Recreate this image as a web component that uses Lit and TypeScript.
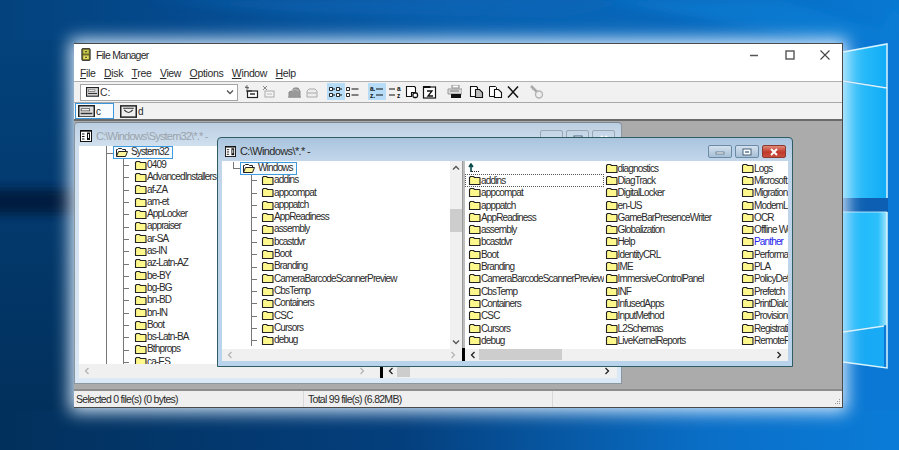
import { LitElement, html, css, svg } from "lit";
import { customElement } from "lit/decorators.js";

const folder = (open = false) => html`<svg class="fd" viewBox="0 0 13 11" width="13" height="11">
  ${open
    ? svg`<path d="M1.5 9.5V2.5h1l1-1h3l1 1h3v1.5" fill="#fff" stroke="#222" stroke-width="1"/><path d="M1.5 9.5l2-5h9l-2 5z" fill="#fff59a" stroke="#222" stroke-width="1"/>`
    : svg`<path d="M1.5 9.5V2.5l1-1h3l1 1h5l.5.5v6.5z" fill="#fdf78c" stroke="#222" stroke-width="1.1"/>`}
</svg>`;

const winIcon = (s: number) => html`<svg viewBox="0 0 12 12" width=${s} height=${s}>
  <rect x=".5" y=".5" width="11" height="11" fill="#fff" stroke="#111"/>
  <path d="M.5 1h11" stroke="#111" stroke-width="1.4"/>
  <path d="M2 4h2.5M2 6.5h2.5M2 9h2.5" stroke="#111"/>
  <rect x="7" y="2.5" width="3" height="7.5" fill="#111"/>
  <path d="M8.5 4v4" stroke="#fff"/>
</svg>`;

const driveIcon = (w: number) => html`<svg viewBox="0 0 16 12" width=${w} height=${(w * 12) / 16}>
  <rect x=".7" y=".7" width="14.6" height="10.6" fill="#ddd" stroke="#222" stroke-width="1.4"/>
  <rect x="3" y="3.5" width="8" height="2" fill="#fff" stroke="#444" stroke-width=".7"/>
  <path d="M2.5 8h11" stroke="#333" stroke-width="1.4"/>
</svg>`;

const cdIcon = html`<svg viewBox="0 0 16 12" width="17" height="13">
  <rect x=".7" y=".7" width="14.6" height="10.6" fill="#eee" stroke="#222" stroke-width="1.4"/>
  <path d="M3 3h10M4 4.5q4 5 8 0" fill="none" stroke="#333" stroke-width="1"/>
</svg>`;

const I: Record<string, any> = {
  connect: svg`<path d="M2 0v5M0 2.5h4M.5 1l3 3" stroke="#555" stroke-width=".8"/><rect x="2.5" y="6" width="10" height="6.5" fill="#fff" stroke="#222" stroke-width="1.2"/><path d="M1 6h6" stroke="#222"/><path d="M5 9h5" stroke="#222" stroke-width="1.4"/>`,
  disconnect: svg`<path d="M1 1l4 4M5 1l-4 4" stroke="#888" stroke-width="1"/><rect x="3" y="6" width="9" height="6" fill="#f3f3f3" stroke="#aaa"/><path d="M5 9h5" stroke="#bbb"/>`,
  share: svg`<path d="M2 12V7l3-1 2-3h4l2 3v6z" fill="#999" stroke="#888"/><path d="M5 6l3-2 4 2" stroke="#bbb" fill="none"/><path d="M1 12h13" stroke="#999" stroke-width="1.4"/>`,
  unshare: svg`<path d="M3 12V6l2-2h6l2 2v6z" fill="#ededed" stroke="#aaa"/><path d="M3 8h10" stroke="#bbb" stroke-width="1.4"/>`,
  bigl: svg`<path d="M1.5 2.5h3v3h-3zM8.5 2.5h3v3h-3zM1.5 8.5h3v3h-3zM8.5 8.5h3v3h-3z" fill="#fff" stroke="#111" stroke-width=".9"/><path d="M5 4h2M12 4h2M5 10h2M12 10h2" stroke="#111"/>`,
  list: svg`<path d="M1.5 2.5h3v3h-3zM1.5 8.5h3v3h-3z" fill="#fff" stroke="#111" stroke-width=".9"/><path d="M6.5 4h7M6.5 10h7" stroke="#111" stroke-width="1.1"/>`,
  az: svg`<text x="1" y="6" font-family="Liberation Sans" font-size="6.5" font-weight="700" fill="#111">a.</text><text x="1" y="13" font-family="Liberation Sans" font-size="6.5" font-weight="700" fill="#111">z.</text><path d="M7 4h7M7 10h7" stroke="#111"/>`,
  za: svg`<text x="9" y="6" font-family="Liberation Sans" font-size="6.5" font-weight="700" fill="#111">a</text><text x="9" y="13" font-family="Liberation Sans" font-size="6.5" font-weight="700" fill="#111">z</text><path d="M1 4h6M1 10h6" stroke="#111"/>`,
  find: svg`<path d="M1.5 1.5h8l1 1v5h-4v4h-5z" fill="#fff" stroke="#111" stroke-width="1.1"/><rect x="8" y="8" width="4.5" height="4.5" rx="1.5" fill="#fff" stroke="#111" stroke-width="1.3"/>`,
  help: svg`<rect x="1.5" y="2" width="12" height="11" fill="#fff" stroke="#111" stroke-width="1.2"/><path d="M1 1h9v2H1z" fill="#111"/><rect x="8.500" y="1" width="4" height="2" fill="#777"/><path d="M5 6h5l-4 5h5" fill="none" stroke="#111" stroke-width="1.3"/>`,
  print: svg`<rect x="5" y="0" width="7" height="3" fill="#fff" stroke="#888"/><path d="M1 4h14v5H1z" fill="#ddd" stroke="#999"/><rect x="4" y="9" width="10" height="4" fill="#111"/><path d="M3 6h9" stroke="#777"/>`,
  copy: svg`<path d="M1.500 1.500h6l1 1v9h-7z" fill="#fff" stroke="#111" stroke-width="1.100"/><path d="M6.500 4.500h4l3 3v5h-7z" fill="#bbb" stroke="#111" stroke-width="1.100"/>`,
  paste: svg`<path d="M1.500 1.500h6l1 1v9h-7z" fill="#fff" stroke="#111"/><path d="M6.500 4.500h4l3 3v5h-7z" fill="#fff" stroke="#111" stroke-width="1.100"/>`,
  del: svg`<path d="M2 1.500l10 11M12 1.500l-10 11" stroke="#111" stroke-width="1.500"/>`,
  key: svg`<path d="M2 1l6 6" stroke="#aaa" stroke-width="2.500"/><circle cx="10" cy="9.500" r="3.500" fill="#eee" stroke="#b5b5b5" stroke-width="1.400"/><path d="M3 5l2-2" stroke="#b5b5b5"/>`,
};

const tools: [string, number, boolean?][] = [
  ["connect", 6], ["disconnect", 0], ["share", 8], ["unshare", 0], ["bigl", 6.5, true], ["list", -0.5],
  ["az", 6.5, true], ["za", 1.5], ["find", 0], ["help", 0], ["print", 8], ["copy", 5], ["paste", 2], ["del", 1], ["key", 6],
];

const backRows = ["0409","AdvancedInstallers","af-ZA","am-et","AppLocker","appraiser","ar-SA","as-IN","az-Latn-AZ","be-BY","bg-BG","bn-BD","bn-IN","Boot","bs-Latn-BA","Bthprops","ca-ES"];
const frontRows = ["addins","appcompat","apppatch","AppReadiness","assembly","bcastdvr","Boot","Branding","CameraBarcodeScannerPreview","CbsTemp","Containers","CSC","Cursors","debug"];
const col2 = ["diagnostics","DiagTrack","DigitalLocker","en-US","GameBarPresenceWriter","Globalization","Help","IdentityCRL","IME","ImmersiveControlPanel","INF","InfusedApps","InputMethod","L2Schemas","LiveKernelReports"];
const col3 = ["Logs","Microsoft.NET","Migration","ModemLogs","OCR","Offline Web Pages","Panther","Performance","PLA","PolicyDefinitions","Prefetch","PrintDialog","Provisioning","Registration","RemotePackages"];

const chev = (d: string, cls = "") => html`<svg class=${cls} viewBox="0 0 8 8" width="8" height="8"><path d=${d} fill="none" stroke="currentColor" stroke-width="1.300"/></svg>`;
const L = "M5.500 1l-3 3 3 3", R = "M2.500 1l3 3-3 3", U = "M1 5.500l3-3 3 3", D = "M1 2.500l3 3 3-3";

@customElement("app-root")
export class AppRoot extends LitElement {
  static styles = css`
    :host { display: block; width: 899px; height: 450px; }
    * { box-sizing: border-box; }
    .desk { position: relative; width: 899px; height: 450px; overflow: hidden; background: #0a6ec4;
      font-family: "Liberation Sans", Arial, sans-serif; font-size: 10px; color: #2a2a2a; }
    .wall { position: absolute; inset: 0; }
    .win { position: absolute; left: 74px; top: 43px; width: 769px; height: 365px; display: flex; flex-direction: column;
      background: #fff; border: 1px solid #4a4a4a; border-width: 1px 1px 1px 0;
      box-shadow: 0 0 16px 4px rgba(226,240,255,.95); }
    .title { height: 21px; flex: none; display: flex; align-items: center; padding-left: 7px; font-size: 10.500px; letter-spacing: -.72px; }
    .title .name { flex: 1; margin-left: 5px; }
    .wc { width: 36px; display: flex; justify-content: center; }
    .wc.cl { width: 34px; }
    .wc svg { display: block; }
    .menu { height: 17px; flex: none; display: flex; align-items: center; gap: 8.500px; padding-left: 6px; font-size: 10.500px; letter-spacing: -.35px; border-bottom: 1px solid #b0b0b0; }
    .menu u { text-decoration-thickness: 1px; text-underline-offset: 1px; }
    .tools { height: 21px; flex: none; display: flex; align-items: center; background: #f1f1f1; padding-left: 6px; border-bottom: 1px solid #a8a8a8; }
    .combo { width: 158px; height: 17px; flex: none; background: #fff; border: 1px solid #a5a5a5; display: flex; align-items: center; gap: 1px; padding: 0 3px 0 5px; font-size: 10.500px; color: #333; }
    .combo .sp { flex: 1; }
    .combo svg.cv { color: #555; }
    .tb { width: 17px; height: 17px; flex: none; display: flex; align-items: center; justify-content: center; margin-top: -1px; }
    .tb.on { background: #b6dcf7; width: 18px; }
    .drives { height: 18px; flex: none; display: flex; align-items: center; gap: 4px; background: #f1f1f1; padding-left: 1px; border-bottom: 2px solid #6a6a6a; }
    .drv { height: 16px; display: flex; align-items: center; gap: 1px; padding: 0 2px; width: 39px; font-size: 10px; }
    .drv.on { border: 1px solid #3a96dd; background: #f8fbfe; }
    .mdi { flex: 1; position: relative; background: #ababab; overflow: hidden; }
    .status { height: 18px; flex: none; display: flex; align-items: center; background: #efefef; border-top: 2px solid #8d8d8d; position: relative; letter-spacing: -.72px; font-size: 10.500px; }
    .s1 { width: 230px; height: 100%; padding-left: 2px; border-right: 1px solid #d8d8d8; display: flex; align-items: center; }
    .s2 { width: 249px; height: 100%; padding-left: 4px; border-right: 1px solid #d8d8d8; display: flex; align-items: center; }
    .grip { position: absolute; right: 1px; bottom: 1px; }

    .mw { position: absolute; display: flex; flex-direction: column; padding: 0 4px 5px; border: 1px solid #2f5d63; border-radius: 4px 4px 0 0; }
    .back { left: 0; top: 1px; width: 548px; height: 262px; border-color: #8a96a0; border-top-color: #7b8894;
      background: linear-gradient(180deg, #bccfe2, #cfdfee 22px, #dbe8f5); }
    .front { left: 143px; top: 16px; width: 576px; height: 230px;
      background: linear-gradient(180deg, #a9c4de, #c2d6ea 22px, #b9d3ec); }
    .cap { height: 23px; flex: none; display: flex; align-items: center; gap: 4px; padding: 3px 0 0 3px; font-size: 11px; letter-spacing: -.62px; }
    .back .cap { color: #9aa3ab; padding-left: 1px; letter-spacing: -.82px; }
    .cap .name { flex: 1; }
    .cbs { display: flex; gap: 3px; margin-right: 2px; margin-top: 1px; }
    .cb { width: 24px; height: 13px; border-radius: 2px; border: 1px solid #6b8aa6; background: linear-gradient(180deg,#d4e1ee,#a7bfd6); display: flex; align-items: center; justify-content: center; }
    .cb.x { background: linear-gradient(180deg,#e08a78,#c0392b 55%,#c9503c); border-color: #8a3a30; }
    .back .cb { background: transparent; border-color: #9aa6b2; width: 23px; height: 17px; }
    .back .cbs { align-self: flex-start; margin-top: 4px; margin-right: 2px; }
    .client { flex: 1; display: flex; min-height: 0; }
    .pane { display: flex; flex-direction: column; min-width: 0; background: #fff; }
    .back .tp { width: 301px; } .back .lp { flex: 1; }
    .front .tp { width: 240px; } .front .lp { flex: 1; }
    .split { width: 3px; flex: none; background: #bdbdbd; display: flex; align-items: flex-end; border-left: 1px solid #9a9a9a; }
    .split i { display: block; width: 3px; margin-left: -1px; height: 13px; background: #000; }
    .back .split i { height: 14px; }
    .body { flex: 1; display: flex; min-height: 0; overflow: hidden; }
    .rows { flex: 1; min-width: 0; position: relative; overflow: hidden; padding-top: 1px; }
    .row { height: 12.300px; line-height: 12.300px; display: flex; align-items: center; white-space: nowrap; position: relative; letter-spacing: -.85px; }
    .fd { flex: none; display: block; }
    .box { display: flex; align-items: center; border: 1px solid #3f9be0; height: 13px; padding: 0 3px 0 1px; background: #f6fbff; position: relative; z-index: 1; }
    .box .txt { margin-left: 3px; }
    .front .row.root { padding-left: 18px; }
    .back .row.root { padding-left: 34px; margin-top: -1px; height: 13px; }
    .front .row.kid { padding-left: 39px; }
    .back .row.kid { padding-left: 55px; }
    .row.kid::before { content: ""; position: absolute; top: 0; bottom: 0; left: var(--lx); width: 1px; background: #777; }
    .row.kid::after { content: ""; position: absolute; top: 50%; left: var(--lx); width: 6px; height: 1px; background: #777; }
    .front .rows { --lx: 29px; --rx: 11px; --rw: 7px; }
    .back .rows { --lx: 44px; --rx: 27px; --rw: 7px; }
    .row.root::before { content: ""; position: absolute; left: var(--rx); top: 0; height: 50%; width: 1px; background: #777; }
    .row.root::after { content: ""; position: absolute; left: var(--rx); top: 50%; width: var(--rw); height: 1px; background: #777; }
    .back .rows::after { content: ""; position: absolute; left: 27px; top: 0; bottom: 0; width: 1px; background: #777; }
    .vs { width: 12px; flex: none; background: #f0f0f0; display: flex; flex-direction: column; align-items: center; justify-content: space-between; padding: 3px 0; position: relative; color: #555; }
    .vthumb { position: absolute; left: 0; top: 48px; width: 12px; height: 23px; background: #cdcdcd; }
    .hs { height: 12px; flex: none; background: #f0f0f0; display: flex; align-items: center; justify-content: space-between; padding: 0 4px; position: relative; color: #222; }
    .back .hs { height: 14px; }
    .hs.dim { color: #b5b5b5; }
    .hthumb { position: absolute; top: 0; bottom: 1px; background: #cdcdcd; }
    .front .hthumb { left: 14px; width: 83px; }
    .back .hthumb { left: 14px; width: 13px; }
    .grid { flex: 1; min-height: 0; display: grid; grid-auto-flow: column; grid-template-rows: repeat(15, 12.300px); grid-template-columns: 136.500px 136.500px 1fr; padding: 1px 0 0 2px; overflow: hidden; }
    .cell { height: 12.300px; display: flex; align-items: center; white-space: nowrap; overflow: hidden; letter-spacing: -.85px; padding-left: 1px; }
    .cell.sel { outline: 1px dotted #555; outline-offset: -1px; margin-left: -2px; padding-left: 3px; height: 13px; }
    .cell.blue { color: #2424ee; }
    .hold { margin-right: 1px; display: flex; }
    .hold.b1 { margin-right: 10px; }
    .hold.b2 { margin-right: 2px; }
  `;

  wall() {
    return html`<svg class="wall" viewBox="0 0 899 450" width="899" height="450">
      <defs>
        <linearGradient id="top" x1="0" y1="0" x2="1" y2="0"><stop offset="0" stop-color="#03427c"/><stop offset=".2" stop-color="#054a8e"/><stop offset=".5" stop-color="#0a60ae"/><stop offset=".75" stop-color="#0868bc"/><stop offset="1" stop-color="#0878d2"/></linearGradient>
        <linearGradient id="bot" x1="0" y1="0" x2="1" y2="0"><stop offset="0" stop-color="#02305c"/><stop offset=".45" stop-color="#043f7d"/><stop offset=".78" stop-color="#0a6ec6"/><stop offset="1" stop-color="#0a7cd8"/></linearGradient>
        <linearGradient id="lf" x1="0" y1="0" x2="0" y2="1"><stop offset="0" stop-color="#03427c"/><stop offset="1" stop-color="#02305c"/></linearGradient>
        <linearGradient id="p1" x1="0" y1="0" x2="1" y2="0"><stop offset="0" stop-color="#3cc6fb"/><stop offset="1" stop-color="#10acf6"/></linearGradient>
        <linearGradient id="p2" x1="0" y1="0" x2="1" y2="0"><stop offset="0" stop-color="#14b4fb"/><stop offset=".8" stop-color="#2cc0fb"/><stop offset="1" stop-color="#a6e6ff"/></linearGradient>
        <filter id="b6" x="-30%" y="-60%" width="160%" height="220%"><feGaussianBlur stdDeviation="5"/></filter>
        <filter id="b1"><feGaussianBlur stdDeviation=".7"/></filter>
      </defs>
      <rect width="899" height="45" fill="url(#top)"/>
      <rect y="405" width="899" height="45" fill="url(#bot)"/>
      <rect y="40" width="76" height="370" fill="url(#lf)"/>
      <rect x="-30" y="189" width="110" height="25" fill="#021d40" filter="url(#b6)"/>
      <path d="M150 0L300 12L560 18L640 0Z" fill="#0d66b8" opacity=".55" filter="url(#b6)"/>
      <path d="M600 0H780L880 30L899 0V44L840 44Z" fill="#0a82d8" opacity=".5" filter="url(#b6)"/>
      <rect x="843" y="40" width="56" height="370" fill="#0a78d4"/>
      <path d="M843 52L887 44V87L843 80Z" fill="url(#p1)"/>
      <path d="M843 82L887 88V198L843 198Z" fill="url(#p1)"/>
      <path d="M843 212L887 212V325L843 331Z" fill="url(#p2)"/>
      <path d="M843 332L884 326V368L843 362Z" fill="#18aaf4"/>
      <rect x="843" y="198" width="45" height="14" fill="#0c5fb2"/>
      <g fill="none" stroke="#d8f5ff" filter="url(#b1)">
        <path d="M843 52L887 44V198M843 81L887 88M887 212V368L843 362M843 332L884 326" stroke-width="1.500"/>
        <path d="M843 212H887" stroke-width=".8"/>
      </g>
    </svg>`;
  }

  tree(root: string, rows: string[]) {
    return html`<div class="rows">
      <div class="row root"><span class="box">${folder(true)}<span class="txt">${root}</span></span></div>
      ${rows.map((r) => html`<div class="row kid">${folder()}<span class="txt">${r}</span></div>`)}
    </div>`;
  }

  caption(t: string, icon: number) {
    return html`<div class="cap">${winIcon(icon)}<span class="name">${t}</span>
      <div class="cbs">
        <div class="cb"><svg width="10" height="6" viewBox="0 0 10 6"><rect x="1" y="3" width="8" height="2" fill="#fff" stroke="#44607a" stroke-width=".7"/></svg></div>
        <div class="cb"><svg width="10" height="8" viewBox="0 0 10 8"><rect x="1" y="1" width="8" height="6" fill="#fff" stroke="#44607a"/><rect x="3" y="3" width="4" height="2" fill="#7f98ae"/></svg></div>
        <div class="cb x"><svg width="10" height="8" viewBox="0 0 10 8"><path d="M2 1l6 6M8 1l-6 6" stroke="#fff" stroke-width="2"/></svg></div>
      </div>
    </div>`;
  }

  render() {
    return html`<div class="desk">
      ${this.wall()}
      <div class="win">
        <div class="title">
          <svg viewBox="0 0 10 14" width="10" height="13"><rect x=".5" y=".5" width="9" height="13" rx="1" fill="#6a6a2a" stroke="#333"/><rect x="2" y="2" width="6" height="4" fill="#c8c84a"/><rect x="2" y="8" width="6" height="4" fill="#e2dc5a"/><path d="M4 4h2M4 10h2" stroke="#222"/></svg>
          <span class="name">File Manager</span>
          <div class="wc"><svg width="10" height="10"><path d="M1 5.500h8" stroke="#555" stroke-width="1.500"/></svg></div>
          <div class="wc"><svg width="10" height="10"><rect x="1" y="1" width="8" height="8" fill="none" stroke="#555" stroke-width="1.400"/></svg></div>
          <div class="wc cl"><svg width="10" height="10"><path d="M.5.500l9 9M9.500.500l-9 9" stroke="#444" stroke-width="1.100"/></svg></div>
        </div>
        <div class="menu">
          ${["File","Disk","Tree","View","Options","Window","Help"].map((m) => html`<span><u>${m[0]}</u>${m.slice(1)}</span>`)}
        </div>
        <div class="tools">
          <div class="combo">${driveIcon(13)}<span>C:</span><span class="sp"></span>${chev(D, "cv")}</div>
          ${tools.map(([k, m, on]) => html`<div class="tb ${on ? "on" : ""}" style="margin-left:${m}px"><svg viewBox="0 0 15 14" width="15" height="14">${I[k]}</svg></div>`)}
        </div>
        <div class="drives">
          <div class="drv on">${driveIcon(17)}<span>c</span></div>
          <div class="drv">${cdIcon}<span>d</span></div>
        </div>
        <div class="mdi">
          <div class="mw back">
            ${this.caption("C:\\Windows\\System32\\*.* -", 12)}
            <div class="client">
              <div class="pane tp">
                <div class="body">${this.tree("System32", backRows)}</div>
                <div class="hs dim">${chev(L)}<span class="hold b1">${chev(R)}</span></div>
              </div>
              <div class="split"><i></i></div>
              <div class="pane lp">
                <div class="body"></div>
                <div class="hs">${chev(L)}<div class="hthumb"></div><span class="hold b2">${chev(R)}</span></div>
              </div>
            </div>
          </div>
          <div class="mw front">
            ${this.caption("C:\\Windows\\*.* -", 11)}
            <div class="client">
              <div class="pane tp">
                <div class="body">
                  ${this.tree("Windows", frontRows)}
                  <div class="vs">${chev(U)}<div class="vthumb"></div>${chev(D)}</div>
                </div>
                <div class="hs dim">${chev(L)}<span class="hold">${chev(R)}</span></div>
              </div>
              <div class="split"><i></i></div>
              <div class="pane lp">
                <div class="grid">
                  <div class="cell"><svg viewBox="0 0 12 10" width="12" height="10"><path d="M3 9V2M1 4l2-3 2 3" fill="none" stroke="#0a4a4a" stroke-width="1.600"/><path d="M6 8.500h1M8 8.500h1M10 8.500h1M3 8.500h2" stroke="#222"/></svg></div>
                  ${frontRows.map((r, i) => html`<div class="cell ${i === 0 ? "sel" : ""}">${folder()}<span class="txt">${r}</span></div>`)}
                  ${col2.map((r) => html`<div class="cell">${folder()}<span class="txt">${r}</span></div>`)}
                  ${col3.map((r) => html`<div class="cell ${r === "Panther" ? "blue" : ""}">${folder()}<span class="txt">${r}</span></div>`)}
                </div>
                <div class="hs">${chev(L)}<div class="hthumb"></div><span class="hold">${chev(R)}</span></div>
              </div>
            </div>
          </div>
        </div>
        <div class="status">
          <div class="s1">Selected 0 file(s) (0 bytes)</div>
          <div class="s2">Total 99 file(s) (6.82MB)</div>
          <svg class="grip" width="8" height="8" viewBox="0 0 8 8"><path d="M6 1h1v1H6zM4 3h1v1H4zM6 3h1v1H6zM2 5h1v1H2zM4 5h1v1H4zM6 5h1v1H6z" fill="#999"/></svg>
        </div>
      </div>
    </div>`;
  }
}
